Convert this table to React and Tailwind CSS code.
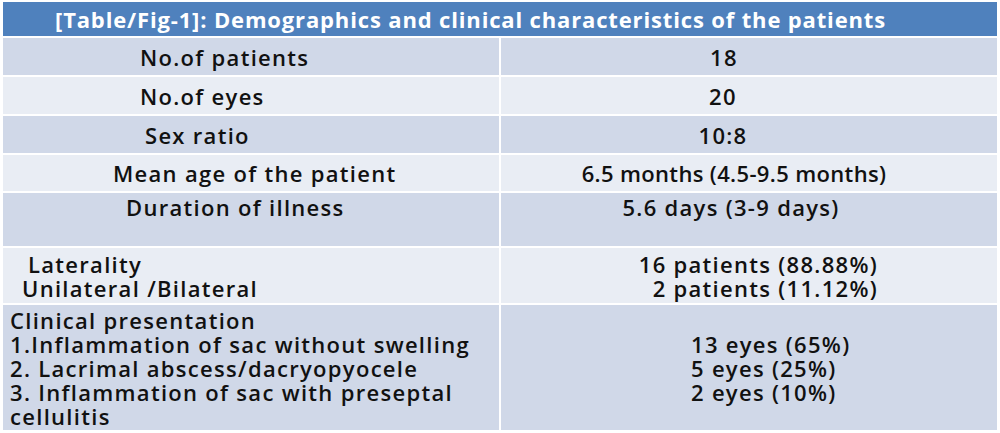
import React from "react";

const font = { fontFamily: "'Open Sans', Lato, sans-serif" };

const simpleRows = [
  { label: "No.of patients", value: "18", pad: "pl-[137px]", vpad: "pr-[50px]", h: "h-[37px]", bg: "bg-[#d0d8e8]" },
  { label: "No.of eyes", value: "20", pad: "pl-[137px]", vpad: "pr-[52px]", h: "h-[37px]", bg: "bg-[#e9edf4]" },
  { label: "Sex ratio", value: "10:8", pad: "pl-[142px]", vpad: "pr-[52px]", h: "h-[37px]", bg: "bg-[#d0d8e8]" },
  {
    label: "Mean age of the patient",
    value: "6.5 months (4.5-9.5 months)",
    pad: "pl-[110px]",
    vpad: "pr-[30px] tracking-[0.35px]",
    h: "h-[36px]",
    bg: "bg-[#e9edf4]",
  },
];

function Row({ bg, h, children }) {
  return <div className={`grid grid-cols-[496px_496px] gap-[2px] ${h}`}>{children(bg)}</div>;
}

export default function App() {
  return (
    <div
      className="w-[1000px] h-[433px] bg-white pt-[2px] pl-[3px] text-[#111] font-semibold text-[22px] leading-[24px] tracking-[1.3px] whitespace-nowrap"
      style={font}
    >
      <div className="flex flex-col gap-[2px] w-[994px]">
        {/* title bar */}
        <div className="h-[34px] bg-[#4f81bd] text-white font-bold tracking-[0.85px] flex items-center pl-[52px]">
          [Table/Fig-1]: Demographics and clinical characteristics of the patients
        </div>

        {simpleRows.map((r) => (
          <Row key={r.label} bg={r.bg} h={r.h}>
            {(bg) => (
              <>
                <div className={`${bg} flex items-center ${r.pad}`}>{r.label}</div>
                <div className={`${bg} flex items-center justify-center ${r.vpad}`}>{r.value}</div>
              </>
            )}
          </Row>
        ))}

        {/* duration row with an empty second line */}
        <Row bg="bg-[#d0d8e8]" h="h-[53px]">
          {(bg) => (
            <>
              <div className={`${bg} pt-[2px] pl-[123px]`}>Duration of illness</div>
              <div className={`${bg} pt-[2px] pr-[36px] text-center`}>5.6 days (3-9 days)</div>
            </>
          )}
        </Row>

        <Row bg="bg-[#e9edf4]" h="h-[55px]">
          {(bg) => (
            <>
              <div className={`${bg} flex flex-col justify-center`}>
                <div className="pl-[25px]">Laterality</div>
                <div className="pl-[19px]">Unilateral /Bilateral</div>
              </div>
              <div className={`${bg} flex flex-col justify-center items-end pr-[119px]`}>
                <div>16 patients (88.88%)</div>
                <div>2 patients (11.12%)</div>
              </div>
            </>
          )}
        </Row>

        <Row bg="bg-[#d0d8e8]" h="h-[125px]">
          {(bg) => (
            <>
              <div className={`${bg} flex flex-col justify-center pl-[7px]`}>
                <div>Clinical presentation</div>
                <div>1.Inflammation of sac without swelling</div>
                <div>2. Lacrimal abscess/dacryopyocele</div>
                <div>3. Inflammation of sac with preseptal</div>
                <div>cellulitis</div>
              </div>
              <div className={`${bg} flex flex-col justify-center pl-[190px]`}>
                <div>13 eyes (65%)</div>
                <div>5 eyes (25%)</div>
                <div>2 eyes (10%)</div>
              </div>
            </>
          )}
        </Row>
      </div>
    </div>
  );
}
